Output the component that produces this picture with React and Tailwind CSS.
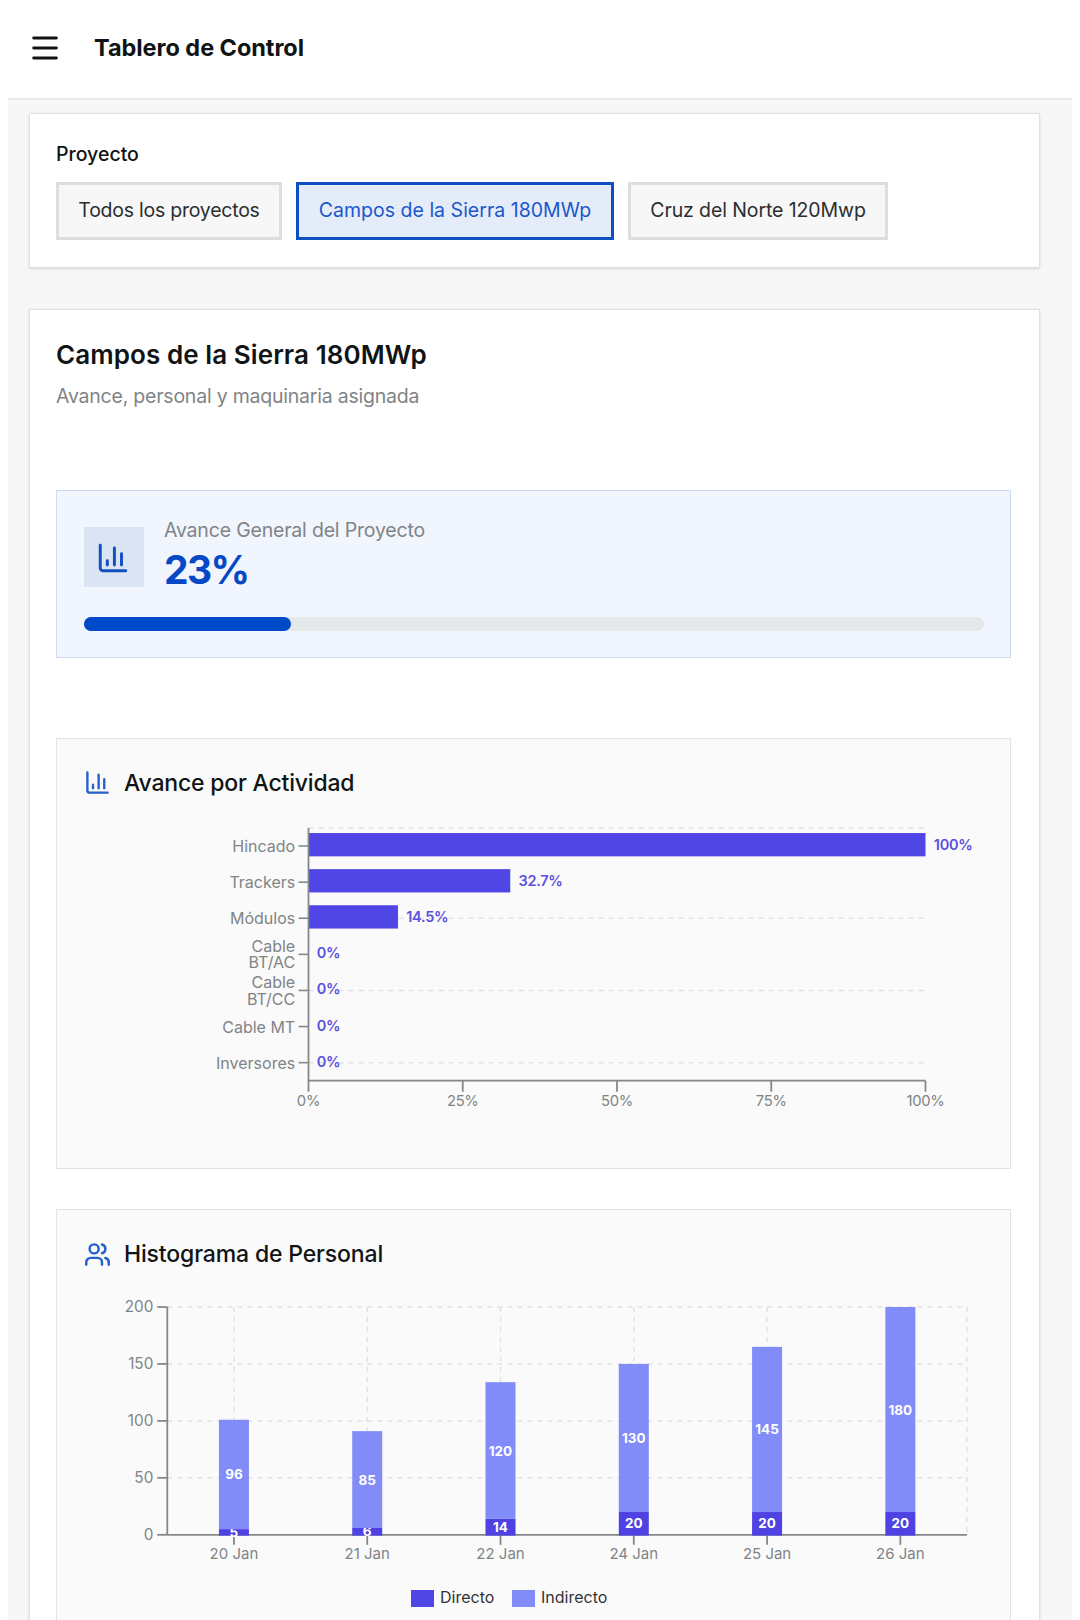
import { Menu, Users } from "lucide-react";

const projects = [
  { name: "Todos los proyectos", width: "w-[226px]", tracking: "tracking-[-0.24px]" },
  { name: "Campos de la Sierra 180MWp", width: "w-[318px]", tracking: "tracking-[0.02px]" },
  { name: "Cruz del Norte 120Mwp", width: "w-[260px]", tracking: "tracking-[-0.1px]" },
];

const activities = [
  { lines: ["Hincado"], value: 100 },
  { lines: ["Trackers"], value: 32.7 },
  { lines: ["Módulos"], value: 14.5 },
  { lines: ["Cable", "BT/AC"], value: 0 },
  { lines: ["Cable", "BT/CC"], value: 0 },
  { lines: ["Cable MT"], value: 0 },
  { lines: ["Inversores"], value: 0 },
];

const staff = [
  { day: "20 Jan", direct: 5, indirect: 96 },
  { day: "21 Jan", direct: 6, indirect: 85 },
  { day: "22 Jan", direct: 14, indirect: 120 },
  { day: "24 Jan", direct: 20, indirect: 130 },
  { day: "25 Jan", direct: 20, indirect: 145 },
  { day: "26 Jan", direct: 20, indirect: 180 },
];

const ChartIcon = ({ size }) => (
  <svg
    width={size}
    height={size}
    viewBox="0 0 24 24"
    fill="none"
    stroke="currentColor"
    strokeWidth="2.1"
    strokeLinecap="round"
    strokeLinejoin="round"
  >
    <path d="M3 3v16a2 2 0 0 0 2 2h16" />
    <path d="M18 17V9" />
    <path d="M13 17V5" />
    <path d="M8 17v-3" />
  </svg>
);

// Horizontal bars, one row per activity
const ActivityChart = () => {
  const left = 224.5;
  const width = 617;
  const top = 11;
  const row = 36.1;
  const bottom = top + row * activities.length;

  return (
    <svg width="900" height="310" className="block text-[16px]">
      <g stroke="#e1e3e3" strokeWidth="1.5" strokeDasharray="5 5">
        {[top, top + row * 2.5, top + row * 4.5, top + row * 6.5].map((y) => (
          <line key={y} x1={left} x2={left + width} y1={y} y2={y} />
        ))}
      </g>

      {activities.map((item, i) => {
        const y = top + row * (i + 0.5);
        const end = left + (width * item.value) / 100;
        return (
          <g key={i}>
            <rect x={left} y={y - 13} width={end - left} height="23.3" fill="#5046e5" />
            <line x1={left - 10} x2={left} y1={y} y2={y} stroke="#85888a" strokeWidth="1.6" />
            <text x={left - 13} y={y} textAnchor="end" fill="#808486">
              {item.lines.map((line, n) => (
                <tspan key={line} x={left - 13.3} dy={n ? 16.3 : item.lines.length > 1 ? -2.2 : 6}>
                  {line}
                </tspan>
              ))}
            </text>
            <text
              x={end + 8.3}
              y={y + 4}
              fill="#5b50dd"
              className="text-[14.5px] font-semibold tracking-[-0.3px]"
            >
              {item.value}%
            </text>
          </g>
        );
      })}

      <g stroke="#85888a" strokeWidth="1.8">
        <line x1={left} x2={left} y1={top} y2={bottom + 11} />
        <line x1={left} x2={left + width} y1={bottom} y2={bottom} />
        {[1, 2, 3, 4].map((n) => (
          <line
            key={n}
            x1={left + (width / 4) * n}
            x2={left + (width / 4) * n}
            y1={bottom}
            y2={bottom + 11}
          />
        ))}
      </g>
      {[0, 25, 50, 75, 100].map((value) => (
        <text
          key={value}
          x={left + (width * value) / 100}
          y={bottom + 25.4}
          textAnchor="middle"
          fill="#808486"
          className="text-[14.8px] tracking-[-0.3px]"
        >
          {value}%
        </text>
      ))}
    </svg>
  );
};

// Stacked columns, direct staff at the bottom
const StaffChart = () => {
  const left = 83.3;
  const right = 883;
  const top = 19;
  const bottom = 246.8;
  const step = (right - left) / staff.length;
  const unit = (bottom - top) / 200;
  const ticks = [0, 50, 100, 150, 200];

  return (
    <svg width="900" height="290" className="block text-[15px]">
      <g stroke="#e1e3e3" strokeWidth="1.5" strokeDasharray="5 5">
        {ticks.slice(1).map((value) => (
          <line
            key={value}
            x1={left}
            x2={right}
            y1={bottom - value * unit}
            y2={bottom - value * unit}
          />
        ))}
        {staff.map((item, i) => (
          <line
            key={item.day}
            x1={left + step * (i + 0.5)}
            x2={left + step * (i + 0.5)}
            y1={top}
            y2={bottom}
          />
        ))}
        <line x1={right} x2={right} y1={top} y2={bottom} />
      </g>

      <g stroke="#85888a" strokeWidth="1.8">
        <line x1={left} x2={left} y1={top} y2={bottom} />
        <line x1={left} x2={right} y1={bottom} y2={bottom} />
        {ticks.map((value) => (
          <line
            key={value}
            x1={left - 10}
            x2={left}
            y1={bottom - value * unit}
            y2={bottom - value * unit}
          />
        ))}
      </g>
      {ticks.map((value) => (
        <text
          key={value}
          x={left - 14}
          y={bottom - value * unit + 5}
          textAnchor="end"
          fill="#808486"
          className="text-[15.3px]"
        >
          {value}
        </text>
      ))}

      {staff.map((item, i) => {
        const x = left + step * (i + 0.5);
        const split = bottom - item.direct * unit;
        const peak = split - item.indirect * unit;
        return (
          <g key={item.day} textAnchor="middle">
            <line x1={x} x2={x} y1={bottom} y2={bottom + 10} stroke="#85888a" strokeWidth="1.8" />
            <text x={x} y={bottom + 24.5} fill="#808486">
              {item.day}
            </text>
            <rect x={x - 15} y={split} width="30" height={bottom - split + 0.8} fill="#4f42e2" />
            <text x={x} y={(split + bottom) / 2 + 5} fill="#fff" className="text-[13.5px] font-bold">
              {item.direct}
            </text>
            {/* the upper bar covers the top of the label when the lower one is short */}
            <rect x={x - 15} y={peak} width="30" height={split - peak} fill="#818cf8" />
            <text x={x} y={(peak + split) / 2 + 5} fill="#fff" className="text-[13.5px] font-bold">
              {item.indirect}
            </text>
          </g>
        );
      })}
    </svg>
  );
};

const App = () => {
  return (
    <div className="w-[1080px] h-[1620px] overflow-hidden bg-white px-2 font-['Inter','Liberation_Sans',sans-serif] text-[#111415]">
      <header className="h-[100px] border-b-2 border-[#e7e8e8] flex items-center pl-[20px] pb-[2px]">
        <Menu size={34} strokeWidth={2.1} />
        <h1 className="ml-[32px] text-[23.5px] font-bold tracking-[-0.05px]">Tablero de Control</h1>
      </header>

      <main className="h-[1520px] bg-[#f7f7f7] pl-[21px] pr-[32px] pt-[13px]">
        <section className="h-[155px] bg-white border border-[#dfe1e1] shadow-sm px-[26px] pt-[26px]">
          <p className="text-[19.5px] leading-[28px] font-medium tracking-[0px]">Proyecto</p>
          <div className="flex gap-[14px] mt-[14px]">
            {projects.map((project, i) => (
              <button
                key={project.name}
                className={`h-[58px] border-3 whitespace-nowrap text-[19.5px] ${project.width} ${project.tracking} ${
                  i === 1
                    ? "border-[#0d50c4] bg-[#e4ebf9] text-[#1b57cb]"
                    : "border-[#dddfdf] bg-[#f7f7f7] text-[#2b2e2f]"
                }`}
              >
                {project.name}
              </button>
            ))}
          </div>
        </section>

        <section className="mt-[41px] h-[1330px] bg-white border border-[#dfe1e1] shadow-sm pl-[26px] pr-[28px] pt-[27px]">
          <h2 className="text-[26px] leading-[36px] font-semibold tracking-[0.08px]">
            Campos de la Sierra 180MWp
          </h2>
          <p className="mt-[9px] text-[19.5px] leading-[28px] tracking-[-0.22px] text-[#808486]">
            Avance, personal y maquinaria asignada
          </p>

          <div className="mt-[80px] h-[168px] bg-[#f1f5fd] border-[1.5px] border-[#cddaf0] pl-[27px] pr-[26px] pt-[25px]">
            <div className="flex items-start">
              <div className="mt-[11px] w-[60px] h-[60px] bg-[#dae4f3] text-[#1450c4] flex items-center justify-center pr-[2px] pt-[1px]">
                <ChartIcon size={34} />
              </div>
              <div className="ml-[20px]">
                <p className="text-[19.5px] leading-[28px] tracking-[-0.19px] text-[#808486]">
                  Avance General del Proyecto
                </p>
                <p className="text-[39px] leading-[51px] tracking-[-1.6px] font-bold text-[#0649c6]">23%</p>
              </div>
            </div>
            <div className="mt-[22px] h-[14px] rounded-full bg-[#e5e8e8]">
              <div className="h-full rounded-full bg-[#0049c8]" style={{ width: "23%" }} />
            </div>
          </div>

          <div className="mt-[80px] h-[431px] bg-[#fafafa] border-[1.5px] border-[#e2e4e4] px-[27px] pt-[26px]">
            <div className="flex items-center gap-[13px]">
              <span className="text-[#2660cd] pb-[2px]">
                <ChartIcon size={27} />
              </span>
              <h3 className="text-[23px] leading-[36px] tracking-[-0.2px] font-medium">Avance por Actividad</h3>
            </div>
            <div className="mt-[16px]">
              <ActivityChart />
            </div>
          </div>

          <div className="mt-[40px] h-[500px] bg-[#fafafa] border-[1.5px] border-[#e2e4e4] px-[27px] pt-[26px]">
            <div className="flex items-center gap-[13px]">
              <Users size={27} strokeWidth={2.2} className="text-[#2660cd]" />
              <h3 className="text-[23px] leading-[36px] tracking-[-0.15px] font-medium">Histograma de Personal</h3>
            </div>
            <div className="mt-[16px]">
              <StaffChart />
            </div>
            <div className="mt-[7px] flex text-[16px] leading-[24px] text-[#303435] pl-[327px]">
              <div className="flex items-center w-[101px]">
                <span className="w-[23px] h-[17px] bg-[#5046e5] mr-[6px]" />
                <span className="pb-[3px]">Directo</span>
              </div>
              <div className="flex items-center">
                <span className="w-[23px] h-[17px] bg-[#818cf8] mr-[6px]" />
                <span className="pb-[3px]">Indirecto</span>
              </div>
            </div>
          </div>
        </section>
      </main>
    </div>
  );
};

export default App;
